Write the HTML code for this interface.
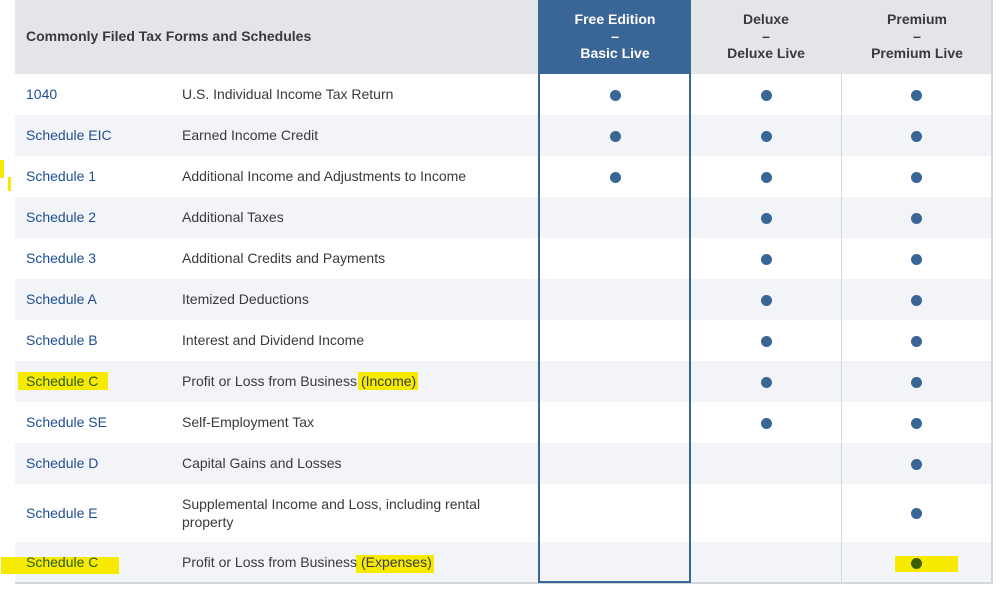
<!DOCTYPE html>
<html><head><style>
*{margin:0;padding:0;box-sizing:border-box}
body{width:1001px;height:596px;background:#fff;font-family:"Liberation Sans",sans-serif;position:relative;overflow:hidden;color:#393a3d}
.a{position:absolute}
.hdr{left:15px;top:0;width:977px;height:74px;background:#e4e5e9}
.row{position:absolute;left:15px;width:977px}
.g{background:#f3f4f7}
.c1{position:absolute;left:11px;color:#1d4f91;font-size:14px}
.c2{position:absolute;left:167px;font-size:14px;color:#393a3d;line-height:18px}
.dot{position:absolute;width:11px;height:11px;border-radius:50%;background:#3a6597}
.hl{background:#f5ea00}
.th{position:absolute;top:11px;text-align:center;font-weight:bold;font-size:14px;line-height:17px;width:150px}
</style></head><body>
<div class="a hdr"></div>
<div class="a" style="left:26px;top:28px;font-weight:bold;font-size:14px;color:#393a3d">Commonly Filed Tax Forms and Schedules</div>
<div class="a" style="left:538px;top:0;width:153px;height:74px;background:#3a6597"></div>
<div class="th" style="left:540px;color:#fff">Free Edition<br>–<br>Basic Live</div>
<div class="th" style="left:691px">Deluxe<br>–<br>Deluxe Live</div>
<div class="th" style="left:842px">Premium<br>–<br>Premium Live</div>

<div class="row" style="top:74px;height:41px"></div>
<div class="row g" style="top:115px;height:41px"></div>
<div class="row" style="top:156px;height:41px"></div>
<div class="row g" style="top:197px;height:41px"></div>
<div class="row" style="top:238px;height:41px"></div>
<div class="row g" style="top:279px;height:41px"></div>
<div class="row" style="top:320px;height:41px"></div>
<div class="row g" style="top:361px;height:41px"></div>
<div class="row" style="top:402px;height:41px"></div>
<div class="row g" style="top:443px;height:41px"></div>
<div class="row" style="top:484px;height:58px"></div>
<div class="row g" style="top:542px;height:41px"></div>
<div class="a" style="left:15px;top:582px;width:978px;height:2px;background:#d4d7dc"></div>
<div class="a" style="left:991px;top:0;width:2px;height:584px;background:#d4d7dc"></div>
<div class="a" style="left:841px;top:74px;width:1px;height:509px;background:#d4d7dc"></div>
<div class="a" style="left:538px;top:74px;width:153px;height:509px;border:2px solid #3a6597;border-top:none"></div>

<div class="a hl" style="left:18px;top:372px;width:90px;height:18px"></div>
<div class="a hl" style="left:358px;top:372px;width:60px;height:18px"></div>
<div class="a hl" style="left:1px;top:557px;width:118px;height:17px"></div>
<div class="a hl" style="left:356px;top:555px;width:78px;height:18px"></div>
<div class="a hl" style="left:895px;top:556px;width:63px;height:16px"></div>
<div class="a hl" style="left:0;top:160px;width:4px;height:18px"></div>
<div class="a hl" style="left:8px;top:177px;width:3px;height:14px"></div>

<div class="c1" style="left:26px;top:86px">1040</div><div class="c2" style="left:182px;top:85px">U.S. Individual Income Tax Return</div>
<div class="c1" style="left:26px;top:127px">Schedule EIC</div><div class="c2" style="left:182px;top:126px">Earned Income Credit</div>
<div class="c1" style="left:26px;top:168px">Schedule 1</div><div class="c2" style="left:182px;top:167px">Additional Income and Adjustments to Income</div>
<div class="c1" style="left:26px;top:209px">Schedule 2</div><div class="c2" style="left:182px;top:208px">Additional Taxes</div>
<div class="c1" style="left:26px;top:250px">Schedule 3</div><div class="c2" style="left:182px;top:249px">Additional Credits and Payments</div>
<div class="c1" style="left:26px;top:291px">Schedule A</div><div class="c2" style="left:182px;top:290px">Itemized Deductions</div>
<div class="c1" style="left:26px;top:332px">Schedule B</div><div class="c2" style="left:182px;top:331px">Interest and Dividend Income</div>
<div class="c1" style="left:26px;top:373px;color:#2a5a1a">Schedule C</div><div class="c2" style="left:182px;top:372px">Profit or Loss from Business (Income)</div>
<div class="c1" style="left:26px;top:414px">Schedule SE</div><div class="c2" style="left:182px;top:413px">Self-Employment Tax</div>
<div class="c1" style="left:26px;top:455px">Schedule D</div><div class="c2" style="left:182px;top:454px">Capital Gains and Losses</div>
<div class="c1" style="left:26px;top:505px">Schedule E</div><div class="c2" style="left:182px;top:495px;width:330px">Supplemental Income and Loss, including rental property</div>
<div class="c1" style="left:26px;top:554px;color:#2a5a1a">Schedule C</div><div class="c2" style="left:182px;top:553px">Profit or Loss from Business (Expenses)</div>

<div class="dot" style="left:610px;top:90px"></div><div class="dot" style="left:761px;top:90px"></div><div class="dot" style="left:911px;top:90px"></div>
<div class="dot" style="left:610px;top:131px"></div><div class="dot" style="left:761px;top:131px"></div><div class="dot" style="left:911px;top:131px"></div>
<div class="dot" style="left:610px;top:172px"></div><div class="dot" style="left:761px;top:172px"></div><div class="dot" style="left:911px;top:172px"></div>
<div class="dot" style="left:761px;top:213px"></div><div class="dot" style="left:911px;top:213px"></div>
<div class="dot" style="left:761px;top:254px"></div><div class="dot" style="left:911px;top:254px"></div>
<div class="dot" style="left:761px;top:295px"></div><div class="dot" style="left:911px;top:295px"></div>
<div class="dot" style="left:761px;top:336px"></div><div class="dot" style="left:911px;top:336px"></div>
<div class="dot" style="left:761px;top:377px"></div><div class="dot" style="left:911px;top:377px"></div>
<div class="dot" style="left:761px;top:418px"></div><div class="dot" style="left:911px;top:418px"></div>
<div class="dot" style="left:911px;top:459px"></div>
<div class="dot" style="left:911px;top:508px"></div>
<div class="dot" style="left:911px;top:558px;background:#3a5f00"></div>
</body></html>
